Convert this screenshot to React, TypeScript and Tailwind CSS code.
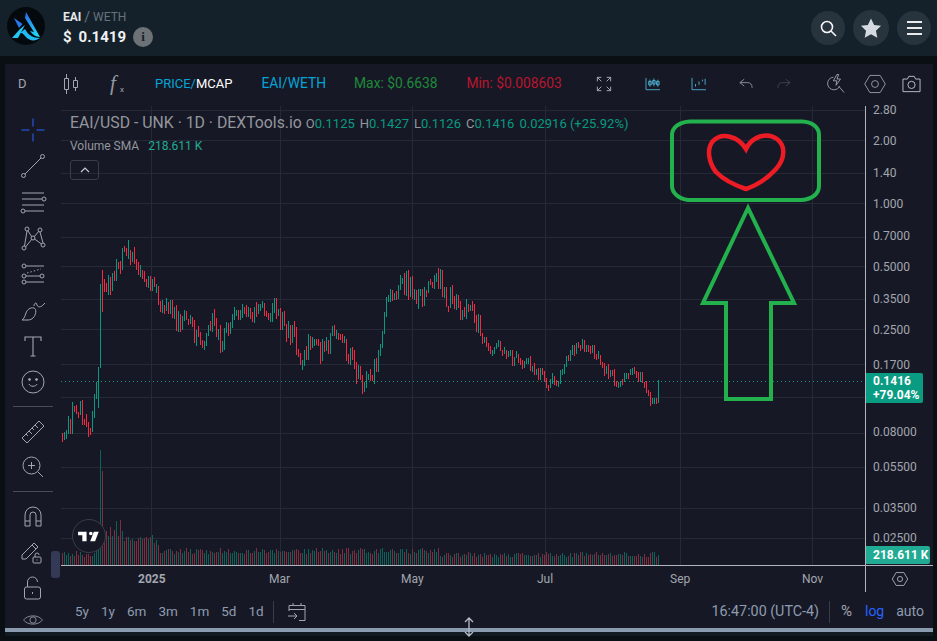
import type { ReactNode } from "react";

// price path, read off the chart as [x, y] in page pixels
const pricePath: [number, number][] = [
  [62, 435], [68, 428], [73, 408], [78, 405], [84, 415], [89, 428], [93, 405], [97, 385], [99, 325], [102, 290],
  [106, 285], [112, 280], [118, 262], [124, 252], [128, 248], [133, 262], [138, 272], [145, 283], [152, 290],
  [160, 298], [170, 312], [180, 322], [187, 318], [195, 340], [203, 347], [212, 318], [222, 345], [232, 315],
  [245, 305], [258, 314], [272, 310], [285, 325], [295, 340], [301, 362], [310, 345], [322, 350], [333, 334],
  [345, 350], [355, 368], [362, 383], [372, 375], [380, 350], [385, 305], [395, 287], [405, 285], [418, 296],
  [428, 287], [438, 277], [445, 297], [455, 302], [470, 312], [480, 330], [487, 350], [500, 347], [510, 358],
  [525, 360], [540, 376], [548, 384], [560, 378], [568, 352], [580, 346], [592, 352], [605, 370], [615, 382],
  [625, 376], [635, 373], [645, 385], [652, 404], [656, 402],
];

const rand = (seed: number) => {
  const v = Math.sin(seed * 127.1 + 11.7) * 43758.5453;
  return v - Math.floor(v);
};

const priceAt = (x: number) => {
  for (let i = 1; i < pricePath.length; i++) {
    const [x1, y1] = pricePath[i];
    if (x <= x1) {
      const [x0, y0] = pricePath[i - 1];
      return y0 + ((y1 - y0) * (x - x0)) / (x1 - x0);
    }
  }
  return pricePath[pricePath.length - 1][1];
};

const candles: { x: number; top: number; bottom: number; up: boolean }[] = [];
let lastClose = 438;
for (let x = 62; x <= 658; x += 2) {
  const n = candles.length;
  const spread = x < 480 ? 1 : 0.6;
  const close = priceAt(x) + (rand(n) - 0.5) * 20 * spread;
  const top = Math.min(lastClose, close) - rand(n + 400) * 6 * spread;
  const bottom = Math.max(lastClose, close) + rand(n + 800) * 6 * spread;
  candles.push({ x, top, bottom: Math.max(bottom, top + 6), up: close < lastClose });
  lastClose = close;
}
candles.forEach((c) => {
  if (c.x === 98) Object.assign(c, { top: 367, bottom: 408, up: true });
  if (c.x === 100) Object.assign(c, { top: 284, bottom: 368, up: true });
  if (c.x === 102) Object.assign(c, { top: 270, bottom: 312, up: false });
  if (c.x === 128) Object.assign(c, { top: 240, bottom: 259, up: true });
  if (c.x === 658) Object.assign(c, { top: 380, bottom: 403, up: true });
});

const volumeHeight = (x: number, n: number) => {
  if (x === 100) return 115;
  if (x === 102) return 94;
  if (x < 96) return 8 + rand(n + 50) * 6;
  if (x < 128) return 22 + rand(n + 50) * 26;
  if (x < 160) return 18 + rand(n + 50) * 12;
  if (x < 440) return 11 + rand(n + 50) * 6;
  return 8 + rand(n + 50) * 5;
};

const gridX = [151, 280, 412, 545, 680, 812];
const gridY = [110, 140, 173, 203, 237, 266, 299, 329, 364, 397, 433, 467, 508, 538];

const priceLabels: [string, number][] = [
  ["2.80", 110], ["2.00", 141], ["1.40", 173], ["1.000", 204], ["0.7000", 236], ["0.5000", 267], ["0.3500", 299],
  ["0.2500", 330], ["0.1700", 365], ["0.08000", 432], ["0.05500", 467], ["0.03500", 508], ["0.02500", 538],
];

const Icon = ({ children, size = 28, className = "text-[#a3a6af]" }: { children: ReactNode; size?: number; className?: string }) => (
  <svg width={size} height={size} viewBox="0 0 28 28" fill="none" stroke="currentColor" strokeWidth="1" className={className}>
    {children}
  </svg>
);

const sideTools: ReactNode[] = [
  <Icon key="cross" className="text-[#2962ff]">
    <path d="M2.500 14h8M17.500 14h8M14 2.500v8M14 17.500v8" />
  </Icon>,
  <Icon key="line">
    <circle cx="4.500" cy="23.500" r="2" />
    <circle cx="23.500" cy="4.500" r="2" />
    <path d="M6 22 22 6" />
  </Icon>,
  <Icon key="fib">
    <path d="M3 5h22M3 11h20M3 17h22M6 23h19" />
    <circle cx="25" cy="11" r="2" />
    <circle cx="4" cy="23" r="2" />
  </Icon>,
  <Icon key="pattern">
    <circle cx="8" cy="5" r="2" />
    <circle cx="21" cy="6" r="2" />
    <circle cx="14" cy="14" r="2" />
    <circle cx="5" cy="24" r="2" />
    <circle cx="24" cy="21" r="2" />
    <path d="M8 7 5.500 22M9 7l4 6M20 7l-5 6M21 8l3 11M6.500 23 13 15M15.500 15l7 5" />
  </Icon>,
  <Icon key="gann">
    <circle cx="5" cy="6" r="2" />
    <circle cx="5" cy="16" r="2" />
    <circle cx="23" cy="16" r="2" />
    <circle cx="5" cy="22" r="2" />
    <path d="M7 6h18M7 16h14M7 22h18" />
    <path d="M8 13l14-4" strokeDasharray="1.500 2" />
  </Icon>,
  <Icon key="brush">
    <path d="M3 24c2-1 3-4 4-7s4-6 8-5c3 1 2 7-1 10-1 1-3 2-5 2H3Z" />
    <path d="M15 10c0-2 1-3 2-3l1 2c1 3 4 2 6 0l2-2" />
  </Icon>,
  <Icon key="text">
    <path d="M6 9V5h16v4M14 5v19M11.500 24h5" strokeWidth="1.100" />
  </Icon>,
  <Icon key="smile">
    <circle cx="14" cy="14" r="11" />
    <circle cx="10.500" cy="11.500" r="1" fill="currentColor" />
    <circle cx="17.500" cy="11.500" r="1" fill="currentColor" />
    <path d="M10 16c1 3 7 3 8 0" />
  </Icon>,
  "divider",
  <Icon key="ruler">
    <path d="m3 21 17-17 5 5-17 17Z M7 17l2 2M10 14l3 3M13 11l2 2M16 8l3 3" />
  </Icon>,
  <Icon key="zoom">
    <circle cx="12.500" cy="12.500" r="8.500" />
    <path d="m19 19 5 5M12.500 9v7M9 12.500h7" />
  </Icon>,
  "divider",
  <Icon key="magnet">
    <path d="M6 24V13a8 8 0 0 1 16 0v11h-5V13a3 3 0 0 0-6 0v11Z M6 19h5M17 19h5" />
  </Icon>,
  <Icon key="pencil">
    <path d="M3 17 15 5l4 4L7 21H3Z M13 7l4 4" />
    <rect x="14" y="19" width="8" height="6" rx="1" />
    <path d="M16 19v-2a2 2 0 0 1 4 0M18 21.500v1" />
  </Icon>,
  <Icon key="lock">
    <rect x="5.500" y="13" width="16" height="12" rx="2" />
    <path d="M8.500 13V8a5 5 0 0 1 10 0M13.500 18v2" />
  </Icon>,
  <Icon key="eye" size={22}>
    <path d="M2 14c5-7 19-7 24 0-5 7-19 7-24 0Z" />
    <circle cx="14" cy="14" r="4" />
  </Icon>,
];

const Hexagon = ({ size = 24, strokeWidth = 1 }: { size?: number; strokeWidth?: number }) => (
  <svg width={size} height={size} viewBox="0 0 28 28" fill="none" stroke="#a3a6af" strokeWidth={strokeWidth}>
    <path d="M8 4h12l6 10-6 10H8L2 14Z" />
    <circle cx="14" cy="14" r="4" />
  </svg>
);

const App = () => (
  <div className="h-[641px] w-[937px] overflow-hidden bg-[#0a0f13] font-['Roboto',sans-serif]">
    {/* Token header */}
    <header className="flex h-[56px] items-center bg-[#15212a] pl-[7px] pr-[6px]">
      <svg width="38" height="38" viewBox="0 0 38 38" className="mt-[-4px]">
        <defs>
          <linearGradient id="logo" x1="0.300" y1="0" x2="0.600" y2="1">
            <stop offset="0" stopColor="#2470ee" />
            <stop offset="1" stopColor="#22d8f6" />
          </linearGradient>
        </defs>
        <circle cx="19" cy="19" r="19" fill="#04090d" />
        <path d="M19 5 33 30C29 30 25 27 23 24L27 25 18 11Z" fill="url(#logo)" />
        <path d="M7 11 15.500 17 12 21Z" fill="#2878ee" />
        <path d="M13 22 18 18 11 31H5Z" fill="#22c8f4" />
        <path d="M18 22C21 28 26 31 33 31 28 35 22 34 18 29 16 26.500 15 26 13 26Z" fill="#22b8f2" />
      </svg>
      <div className="ml-[18px] flex flex-col">
        <div className="flex items-center text-[12px] leading-[16px]">
          <span className="font-bold text-[#e6e8ec]">EAI</span>
          <span className="ml-[3px] text-[14px] text-[#67727e]">/</span>
          <span className="ml-[3px] text-[#67727e]">WETH</span>
        </div>
        <div className="mt-[2px] flex items-center">
          <span className="text-[15px] leading-[20px] font-bold text-[#f0f1f3]">$</span>
          <span className="ml-[7px] text-[15px] leading-[20px] font-bold text-[#f0f1f3]">0.1419</span>
          <span className="ml-[7px] flex h-5 w-5 items-center justify-center rounded-full bg-[#6d7276] font-['Liberation_Serif',serif] text-[13px] font-bold text-[#15212a]">i</span>
        </div>
      </div>
      <div className="ml-auto flex items-center gap-[8px]">
        <button className="flex h-[34px] w-[34px] items-center justify-center rounded-full bg-[#27333d]">
          <svg width="18" height="18" viewBox="0 0 18 18" fill="none" stroke="#f4f5f7" strokeWidth="1.600">
            <circle cx="8" cy="8" r="5.500" />
            <path d="m12 12 5 5" />
          </svg>
        </button>
        <button className="flex h-[36px] w-[36px] items-center justify-center rounded-full bg-[#27333d]">
          <svg width="22" height="22" viewBox="0 0 24 24" fill="#d5d9e2">
            <path d="M12 1.500 15.400 8.600 23 9.600l-5.600 5.300 1.500 7.600L12 18.800l-6.900 3.700 1.500-7.600L1 9.600l7.600-1Z" />
          </svg>
        </button>
        <button className="flex h-[34px] w-[34px] flex-col items-center justify-center gap-[4px] rounded-full bg-[#27333d]">
          <span className="h-[2px] w-[15px] bg-[#e8eaee]" />
          <span className="h-[2px] w-[15px] bg-[#e8eaee]" />
          <span className="h-[2px] w-[15px] bg-[#e8eaee]" />
        </button>
      </div>
    </header>

    {/* Chart widget */}
    <main className="relative mt-[8px] ml-[5px] flex h-[572px] w-[928px] flex-col bg-[#161925]">
      <div className="flex h-[42px] items-center pb-[3px] text-[13.800px] leading-none">
        <span className="ml-[13px] w-[10px] text-[13px] text-[#a3a6af]">D</span>
        <svg width="14" height="20" viewBox="0 0 14 20" fill="none" stroke="#a3a6af" className="ml-[36px]">
          <path d="M.500 4.500h4v11h-4ZM2.500 0v4.500M2.500 15.500V20M9.500 6.500h4v7h-4ZM11.500 3v3.500M11.500 13.500V17" />
        </svg>
        <span className="ml-[32px] w-[10px] font-['Liberation_Serif',serif] text-[21px] font-light text-[#9598a1] italic">f</span>
        <span className="mt-[12px] w-[6px] text-[8px] text-[#a3a6af]">x</span>
        <span className="ml-[29px] text-[13px] text-[#06a4d6]">PRICE</span>
        <span className="text-[13px] text-[#06a4d6]">/</span>
        <span className="text-[13px] text-white">MCAP</span>
        <span className="ml-[29px] text-[#06a4d6]">EAI/WETH</span>
        <span className="ml-[28px] text-[#1e8a3a]">Max: $0.6638</span>
        <span className="ml-[29px] text-[#b9152e]">Min: $0.008603</span>
        <svg width="16" height="16" viewBox="0 0 18 18" fill="none" stroke="#b4b7be" className="ml-[34px]">
          <path d="M1.500 6V1.500H6M1.500 1.500 6 6M12 1.500h4.500V6M16.500 1.500 12 6M1.500 12v4.500H6M1.500 16.500 6 12M16.500 12v4.500H12M16.500 16.500 12 12" />
        </svg>
        <svg width="16" height="14" viewBox="0 0 18 16" fill="none" stroke="#4fb4d8" className="ml-[33px]">
          <path d="M1 1v13.500h16M5.500 3v8M4 5h3v4H4ZM10 1.500v9M8.500 4h3v4h-3ZM14.500 3v8M13 5h3v4h-3Z" />
        </svg>
        <svg width="16" height="14" viewBox="0 0 18 16" fill="none" stroke="#4fb4d8" className="ml-[30px]">
          <path d="M1 1v13.500h16M5 8v3M9 5v4M13 3v2M16 2v7" />
        </svg>
        <svg width="14" height="11" viewBox="0 0 16 12" fill="none" stroke="#8a8d96" strokeWidth="1.100" className="ml-[32px]">
          <path d="M6 1 1 5l5 4M1 5h9c3 0 5 2 5 6" />
        </svg>
        <svg width="14" height="11" viewBox="0 0 16 12" fill="none" stroke="#41444e" strokeWidth="1.100" className="ml-[24px]">
          <path d="m10 1 5 4-5 4M15 5H6c-3 0-5 2-5 6" />
        </svg>
        <svg width="18" height="21" viewBox="0 0 20 22" fill="none" stroke="#a3a6af" className="ml-[36px]">
          <path d="M7 4a7 7 0 1 0 7 10M13 14l6 7M11 1 7 8h4l-1 5 5-7h-4l2-5Z" />
        </svg>
        <span className="ml-[18px] flex"><Hexagon /></span>
        <svg width="21" height="18" viewBox="0 0 22 20" fill="none" stroke="#c5c7cd" className="ml-[14px]">
          <path d="M1.500 4.500h5l1.500-3h6l1.500 3h5v14h-19Z" />
          <circle cx="11" cy="11" r="4" />
        </svg>
      </div>

      <div className="flex min-h-0 flex-1">
        {/* Drawing tools */}
        <aside className="flex w-[56px] flex-col overflow-hidden pt-[6px]">
          {sideTools.map((tool, i) =>
            tool === "divider" ? (
              <div key={i} className="mx-[8px] my-[6px] h-px shrink-0 bg-[#4a4c55]" />
            ) : (
              <div key={i} className={`flex shrink-0 items-center justify-center ${i === sideTools.length - 1 ? "h-7" : "h-9"}`}>
                {tool}
              </div>
            ),
          )}
        </aside>

        <div className="flex min-w-0 flex-1 flex-col">
          <div className="flex h-[459px]">
            {/* Price pane */}
            <div className="relative w-[804px] overflow-hidden">
              <svg width="804" height="459" viewBox="61 106 804 459">
                <g stroke="#262a36">
                  {gridX.map((x) => (
                    <line key={x} x1={x + 0.5} x2={x + 0.5} y1="106" y2="565" />
                  ))}
                  {gridY.map((y) => (
                    <line key={y} x1="61" x2="865" y1={y + 0.5} y2={y + 0.5} />
                  ))}
                </g>
                <line x1="61" x2="865" y1="381.500" y2="381.500" stroke="#089981" strokeDasharray="1 3" />
                <g shapeRendering="crispEdges">
                  {candles.map((c, i) => (
                    <line key={i} x1={c.x + 0.5} x2={c.x + 0.5} y1={c.top} y2={c.bottom} stroke={c.up ? "#089981" : "#f7283f"} />
                  ))}
                  {candles.map((c, i) => (
                    <line key={i} x1={c.x + 0.5} x2={c.x + 0.5} y1={565 - volumeHeight(c.x, i)} y2="565" stroke={c.up ? "#0d6156" : "#7d2f3f"} />
                  ))}
                </g>
                {/* hand drawn annotation */}
                <g fill="none" stroke="#22b14c" strokeWidth="4">
                  <path d="M690 121.500H802C812 122 819 127 819 135V186C819 194 812 199 802 200H688C679 199 672 193 672 186V135C672 127 680 122 690 121.500Z" />
                  <path d="M748 208 703 303H726V399H771V303H794Z" />
                </g>
                <path d="M746 149C738 136 722 132 713 141C706 149 709 163 716 172C725 181 737 186 746 189C755 186 767 179 776 169C785 159 786 146 777 139C767 132 752 136 746 149Z" fill="none" stroke="#ed1c24" strokeWidth="4.500" />
              </svg>

              <div className="absolute top-[5px] left-[9px] flex items-baseline whitespace-nowrap">
                <span className="text-[15.800px] text-[#94969e]">EAI/USD - UNK · 1D · DEXTools.io</span>
                <span className="ml-[4px] text-[13px] text-[#94969e]">O<span className="text-[#089981]">0.1125</span></span>
                <span className="ml-[5px] text-[13px] text-[#94969e]">H<span className="text-[#089981]">0.1427</span></span>
                <span className="ml-[5px] text-[13px] text-[#94969e]">L<span className="text-[#089981]">0.1126</span></span>
                <span className="ml-[5px] text-[13px] text-[#94969e]">C<span className="text-[#089981]">0.1416</span></span>
                <span className="ml-[5px] text-[13px] text-[#089981]">0.02916 (+25.92%)</span>
              </div>
              <div className="absolute top-[32px] left-[9px] flex text-[12px] leading-[16px]">
                <span className="text-[#94969e]">Volume SMA</span>
                <span className="ml-[9px] text-[#22ab94]">218.611 K</span>
              </div>
              <div className="absolute top-[54px] left-[9px] flex h-[20px] w-[29px] items-center justify-center rounded-[3px] border border-[#3a3d48]">
                <svg width="10" height="6" viewBox="0 0 10 6" fill="none" stroke="#c8cad0" strokeWidth="1.200">
                  <path d="m1 5 4-4 4 4" />
                </svg>
              </div>
              <div className="absolute top-[413px] left-[11px] flex h-[34px] w-[34px] items-center justify-center rounded-full border border-[#3a3d48] bg-[#161925]">
                <svg width="22" height="17" viewBox="0 0 36 28" fill="#ffffff">
                  <path d="M14 6H0v6h7v10h7V6Zm14 16h-8l6-16h8l-6 16Zm-7-16a3 3 0 1 1 0 6 3 3 0 0 1 0-6Z" />
                </svg>
              </div>
            </div>

            {/* Price axis */}
            <div className="relative w-[68px] border-l border-[#b2b5be] text-[12px] leading-[14px] text-[#a3a6af]">
              {priceLabels.map(([label, y]) => (
                <span key={label} className="absolute left-[7px]" style={{ top: y - 106 - 7 }}>
                  {label}
                </span>
              ))}
              <div className="absolute top-[267px] left-0 flex h-[30px] w-[57px] flex-col justify-center rounded-r-[2px] bg-[#0a9c82] pl-[7px] text-[12px] leading-[14px] font-bold text-white">
                <span>0.1416</span>
                <span>+79.04%</span>
              </div>
              <div className="absolute top-[440px] left-0 flex h-[18px] w-[64px] items-center rounded-r-[2px] bg-[#22ab94] pl-[7px] text-[12px] font-bold text-white">
                218.611 K
              </div>
            </div>
          </div>

          {/* Time axis */}
          <div className="flex h-[27px] border-t border-[#b2b5be]">
            <div className="relative w-[804px] text-[12px] text-[#a3a6af]">
              <span className="absolute top-[4px] left-[77px] font-bold">2025</span>
              <span className="absolute top-[4px] left-[208px]">Mar</span>
              <span className="absolute top-[4px] left-[340px]">May</span>
              <span className="absolute top-[4px] left-[476px]">Jul</span>
              <span className="absolute top-[4px] left-[609px]">Sep</span>
              <span className="absolute top-[4px] left-[741px]">Nov</span>
            </div>
            <div className="flex w-[68px] items-center justify-center border-l border-[#b2b5be]">
              <Hexagon size={18} strokeWidth={1.500} />
            </div>
          </div>

          {/* Range bar */}
          <div className="flex h-[36px] items-center pt-[3px] text-[14px] text-[#8f9bb0]">
            <div className="ml-[14px] flex gap-[12px] text-[13.500px]">
              <span>5y</span>
              <span>1y</span>
              <span>6m</span>
              <span>3m</span>
              <span>1m</span>
              <span>5d</span>
              <span>1d</span>
            </div>
            <div className="ml-[9px] h-[22px] w-px bg-[#3a3d48]" />
            <svg width="20" height="20" viewBox="0 0 20 20" fill="none" stroke="#a3a6af" className="ml-[13px]">
              <path d="M2 9V3.500h16v15h-6M2 7.500h16M6 1v3M14 1v3M1 14h9M7 11l3 3-3 3" />
            </svg>
            <span className="ml-auto text-[14.300px]">16:47:00 (UTC-4)</span>
            <div className="ml-[10px] h-[22px] w-px bg-[#3a3d48]" />
            <span className="ml-[11px] text-[15px] text-[#a3a6af]">%</span>
            <span className="ml-[13px] text-[#2962ff]">log</span>
            <span className="mr-[9px] ml-[12px]">auto</span>
          </div>
        </div>
      </div>

      {/* Scroll thumb on the toolbar edge */}
      <div className="absolute top-[487px] left-[46px] h-[27px] w-[9px] rounded-[3px] bg-[#343a55]" />

      <div className="relative h-[4px] shrink-0 bg-[#8a9bb0]">
        <svg width="12" height="20" viewBox="0 0 12 20" fill="none" stroke="#b4bcc8" strokeWidth="1.300" className="absolute top-[-11px] left-[458px]">
          <path d="M6 1v18M2 5l4-4 4 4M2 15l4 4 4-4" />
        </svg>
      </div>
      <div className="h-[4px] shrink-0 bg-[#111a20]" />
    </main>
  </div>
);

export default App;
